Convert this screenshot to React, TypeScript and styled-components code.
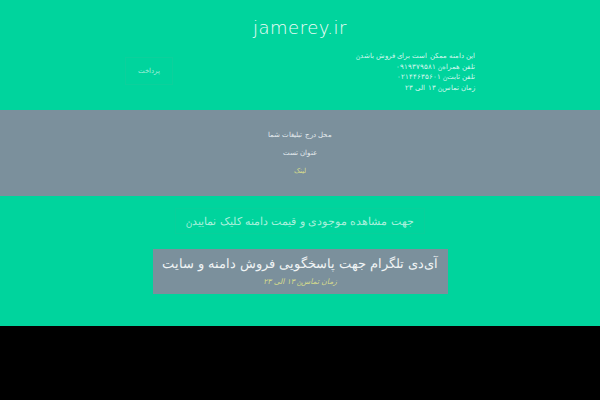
import React from "react";
import styled, { createGlobalStyle } from "styled-components";

const GlobalStyle = createGlobalStyle`
  html, body {
    margin: 0;
    padding: 0;
    background: #000;
  }

  body {
    font-family: "DejaVu Sans", sans-serif;
    font-weight: 200;
  }
`;

const Page = styled.div`
  width: 600px;
  height: 400px;
  overflow: hidden;
  background: #000;
`;

const Header = styled.header`
  height: 110px;
  background: #00d49d;
  box-sizing: border-box;
  padding-top: 16px;
`;

const Title = styled.h1`
  margin: 0;
  height: 24px;
  line-height: 24px;
  font-size: 18px;
  font-weight: 200;
  letter-spacing: 0.5px;
  text-align: center;
  color: #f0fdf9;
`;

const HeaderRow = styled.div`
  display: flex;
  justify-content: space-between;
  align-items: flex-start;
  margin-top: 11px;
  padding: 0 125px;
`;

const PayButton = styled.a`
  display: block;
  margin-top: 6px;
  padding: 0 12px;
  height: 26px;
  line-height: 26px;
  font-size: 7px;
  color: #a5eeda;
  border: 1px solid #0cd09c;
`;

const Contact = styled.div`
  direction: rtl;
  font-size: 7px;
  line-height: 10.7px;
  color: #d5f8ee;
`;

const Ads = styled.section`
  height: 86px;
  background: #7b909c;
  display: flex;
  flex-direction: column;
  align-items: center;
  direction: rtl;
  font-size: 7px;
  padding-top: 20px;
  box-sizing: border-box;
`;

const AdLine = styled.div<{ $accent?: boolean }>`
  height: 18px;
  line-height: 10px;
  color: ${(p) => (p.$accent ? "#d8dd8c" : "#e4ebee")};
`;

const Lower = styled.section`
  height: 130px;
  background: #00d49d;
  display: flex;
  flex-direction: column;
  align-items: center;
  padding-top: 12px;
  box-sizing: border-box;
`;

const CheckLink = styled.a`
  display: block;
  direction: rtl;
  height: 24px;
  line-height: 24px;
  padding: 0 10px;
  font-size: 10.5px;
  color: #a8f0dc;
  border: 1px solid #08d09b;
`;

const TelegramBox = styled.div`
  margin-top: 15px;
  width: 295px;
  height: 45px;
  background: #7b909c;
  direction: rtl;
  text-align: center;
  padding-top: 5px;
  box-sizing: border-box;
`;

const TelegramTitle = styled.div`
  font-size: 13px;
  line-height: 20px;
  color: #f0f4f5;
  white-space: nowrap;
`;

const Hours = styled.div`
  margin-top: 2px;
  font-size: 7.5px;
  line-height: 12px;
  font-style: italic;
  color: #d8dd8c;
`;

export default function App() {
  return (
    <Page>
      <GlobalStyle />
      <Header>
        <Title>jamerey.ir</Title>
        <HeaderRow>
          <PayButton>پرداخت</PayButton>
          <Contact>
            <div>این دامنه ممکن است برای فروش باشد&#x088F;</div>
            <div>تلفن همراه&#x088F; ۰۹۱۹۳۷۹۵۸۱</div>
            <div>تلفن ثابت&#x088F; ۰۲۱۴۴۶۳۵۶۰۱</div>
            <div>زمان تماس&#x088F; ۱۳ الی ۲۳</div>
          </Contact>
        </HeaderRow>
      </Header>
      <Ads>
        <AdLine>محل درج تبلیغات شما</AdLine>
        <AdLine>عنوان تست</AdLine>
        <AdLine $accent>لینک</AdLine>
      </Ads>
      <Lower>
        <CheckLink>جهت مشاهده موجودی و قیمت دامنه کلیک نمایید&#x088F;</CheckLink>
        <TelegramBox>
          <TelegramTitle>آی‌دی تلگرام جهت پاسخگویی فروش دامنه و سایت</TelegramTitle>
          <Hours>زمان تماس&#x088F; ۱۳ الی ۲۳</Hours>
        </TelegramBox>
      </Lower>
    </Page>
  );
}
